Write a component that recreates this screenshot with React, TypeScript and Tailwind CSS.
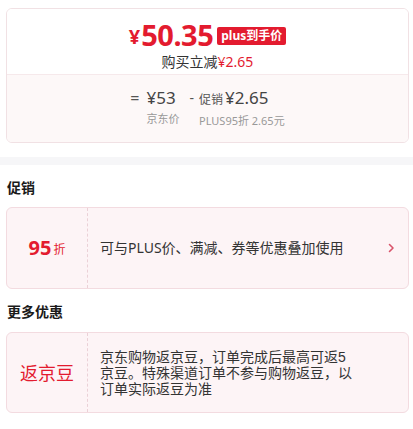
import React from 'react';

const RED = 'text-[#e31b2f]';

function Chevron() {
  return (
    <svg width="7" height="10" viewBox="0 0 7 10" fill="none">
      <path d="M1.5 1.5L5 5L1.5 8.5" stroke="#d9546b" strokeWidth="1.6" strokeLinecap="round" strokeLinejoin="round" />
    </svg>
  );
}

export default function App() {
  return (
    <div
      className="w-[413px] h-[429px] bg-white overflow-hidden text-[#333]"
      style={{ fontFamily: '"Noto Sans", "Noto Sans CJK SC", sans-serif' }}
    >
      {/* price card */}
      <div className="pt-[8px] pl-[6px] pr-[4px]">
        <div className="rounded-[6px] border border-[#f1e1e4] overflow-hidden">
          <div className="h-[65px] bg-white flex flex-col items-center pt-[9px]">
            <div className="flex items-center h-[34px]">
              <span className={`${RED} font-bold text-[20px] leading-[34px] mr-[1px] mt-[3px]`}>¥</span>
              <span className={`${RED} font-bold text-[29px] leading-[34px] tracking-[-0.5px]`}>50.35</span>
              <span className="ml-[4px] bg-[#e31b2f] text-white font-bold text-[12px] leading-[18px] px-[4px] rounded-[2px] mt-[2px]">
                plus到手价
              </span>
            </div>
            <div className="text-[14px] leading-[18px] mt-[1px]">
              购买立减<span className={RED}>¥2.65</span>
            </div>
          </div>
          <div className="h-[68px] bg-[#fdf8f8] border-t border-[#f6e9eb] flex justify-center pt-[12px]">
            <div className="flex">
              <span className="text-[16px] leading-[22px] text-[#555] mr-[7px]">=</span>
              <div className="flex flex-col">
                <span className="text-[17px] leading-[22px] text-[#444]">¥53</span>
                <span className="text-[11px] leading-[18px] text-[#999] mt-[1px]">京东价</span>
              </div>
              <span className="text-[14px] leading-[22px] text-[#555] ml-[10px] mr-[5px]">-</span>
              <div className="flex flex-col">
                <span className="text-[17px] leading-[22px] text-[#444]">
                  <span className="text-[12px] text-[#555] mr-[2px]">促销</span>¥2.65
                </span>
                <span className="text-[11px] leading-[18px] text-[#999] mt-[1px]">PLUS95折 2.65元</span>
              </div>
            </div>
          </div>
        </div>
      </div>

      <div className="h-[8px] bg-[#f6f6f8] mt-[14px]" />

      <div className="pl-[7px] pr-[4px]">
        <div className="text-[14px] font-bold leading-[20px] text-[#1a1a1a] mt-[13px]">促销</div>
        <div className="mt-[9px] -ml-[1px] h-[82px] rounded-[6px] border border-[#f3dbe0] bg-[#fdf4f6] flex items-center">
          <div className="w-[81px] h-full border-r border-dashed border-[#ebd1d7] flex items-center justify-center">
            <span className={`${RED} font-bold text-[20px] leading-none`}>95</span>
            <span className={`${RED} text-[12px] leading-none ml-[2px] mt-[3px]`}>折</span>
          </div>
          <div className="flex-1 pl-[12px] text-[14px] leading-[20px] text-[#333]">可与PLUS价、满减、券等优惠叠加使用</div>
          <div className="pr-[13px] flex items-center">
            <Chevron />
          </div>
        </div>

        <div className="text-[14px] font-bold leading-[20px] text-[#1a1a1a] mt-[13px]">更多优惠</div>
        <div className="mt-[10px] -ml-[1px] h-[81px] rounded-[6px] border border-[#f3dbe0] bg-[#fdf4f6] flex items-center">
          <div className="w-[81px] h-full border-r border-dashed border-[#ebd1d7] flex items-center justify-center">
            <span className={`${RED} text-[18px] leading-none`}>返京豆</span>
          </div>
          <div className="pl-[12px] w-[270px] font-['Liberation_Sans','Noto_Sans_CJK_SC',sans-serif] text-[14px] leading-[16px] text-[#333]">
            京东购物返京豆，订单完成后最高可返5<br />
            京豆。特殊渠道订单不参与购物返豆，以<br />
            订单实际返豆为准
          </div>
        </div>
      </div>
    </div>
  );
}
